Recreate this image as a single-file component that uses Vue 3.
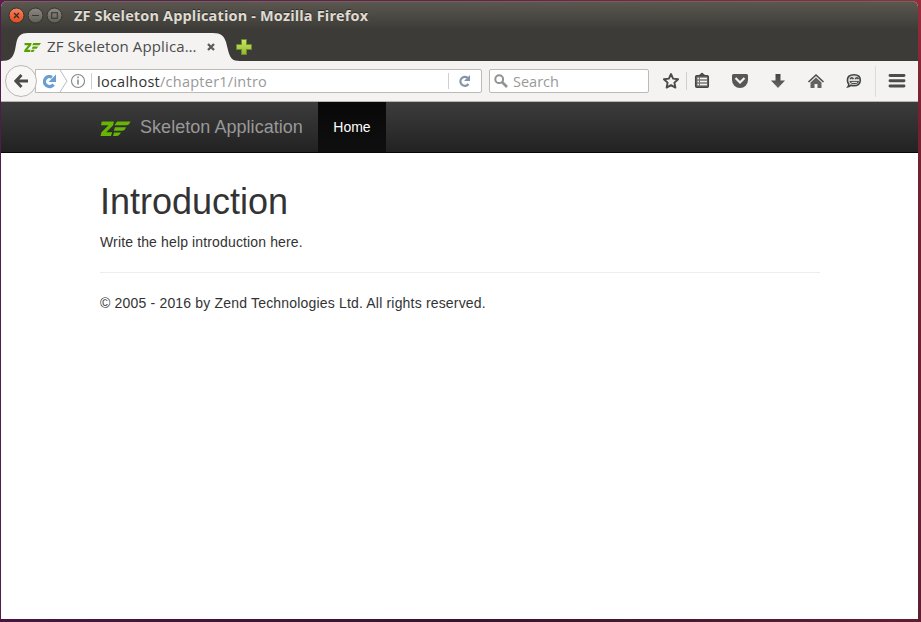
<script setup>
const title = 'ZF Skeleton Application - Mozilla Firefox'
</script>

<template>
  <div class="desktop">
    <div class="window">
      <header class="chrome">
        <div class="titlebar">
          <svg class="controls" width="60" height="20" viewBox="0 0 60 20">
            <defs>
              <linearGradient id="close" x1="0" y1="0" x2="0" y2="1">
                <stop offset="0" stop-color="#f58363" /><stop offset="1" stop-color="#df4a1b" />
              </linearGradient>
              <linearGradient id="grey" x1="0" y1="0" x2="0" y2="1">
                <stop offset="0" stop-color="#8c8981" /><stop offset="1" stop-color="#605e58" />
              </linearGradient>
            </defs>
            <circle cx="10.5" cy="9.5" r="7.5" fill="url(#close)" stroke="#35332e" />
            <circle cx="29.5" cy="9.5" r="7.5" fill="url(#grey)" stroke="#35332e" />
            <circle cx="48.5" cy="9.5" r="7.5" fill="url(#grey)" stroke="#35332e" />
            <path d="M8 7l5 5M13 7l-5 5" stroke="#45291f" stroke-width="1.4" />
            <path d="M26 9.5h7" stroke="#3a3834" stroke-width="1.2" />
            <rect x="45.7" y="6.7" width="5.6" height="5.6" fill="none" stroke="#3a3834" stroke-width="1.1" />
          </svg>
          <span class="window-title">{{ title }}</span>
        </div>
        <div class="tabs">
          <div class="tab">
            <svg class="tab-shape" width="239" height="29" viewBox="0 0 239 29">
              <path d="M0 29V28C9 28 12 25 14 17L15.500 9C17 3 20 0 27 0H212C220 0 223 3 225 9L227 17C229 25 231 28 239 28V29Z" fill="#f4f3f2" />
            </svg>
            <svg class="favicon" width="17" height="9" viewBox="0 0 31 16" preserveAspectRatio="none">
              <path d="M1 0H14L13 4L6 12H12L11 16H0L1 12L8 4H1Z" fill="#56a000" />
              <path d="M17 0H31L28 4H15ZM16 6H26L23 10H14ZM14 12H20L17 16H12Z" fill="#56a000" />
            </svg>
            <span class="tab-label">ZF Skeleton Applica…</span>
            <svg class="tab-close" width="8" height="8" viewBox="0 0 8 8"><path d="M1 1l6 6M7 1L1 7" stroke="#5c5b58" stroke-width="2.300" /></svg>
          </div>
          <svg class="new-tab" width="16" height="16" viewBox="0 0 16 16">
            <defs><linearGradient id="plus" x1="0" y1="0" x2="0" y2="1"><stop offset="0" stop-color="#d0e464" /><stop offset="1" stop-color="#92b72e" /></linearGradient></defs>
            <path d="M5.500 .5h5v5h5v5h-5v5h-5v-5h-5v-5h5z" fill="url(#plus)" stroke="#668d2c" />
          </svg>
        </div>
        <div class="toolbar">
          <div class="back">
            <svg width="16" height="16" viewBox="0 0 16 16"><path d="M8.500 2L2.800 8l5.700 6M3 8h12" fill="none" stroke="#4b4b4a" stroke-width="2.900" /></svg>
          </div>
          <div class="urlbar">
            <svg class="identity" width="57" height="22" viewBox="0 0 57 22">
              <path d="M17.500 14.500A5 5 0 1 1 16 7.300" fill="none" stroke="#6a9fd4" stroke-width="3.300" />
              <path d="M20 4.500V12H12.500Z" fill="#6a9fd4" />
              <path d="M24 0L31 11L24 22" fill="none" stroke="#bcbcbb" />
              <circle cx="42" cy="11" r="6.500" fill="none" stroke="#858585" stroke-width="1.100" />
              <path d="M42 9.500v5M42 6.500v1.700" stroke="#858585" stroke-width="1.500" />
              <path d="M55.500 3v16" stroke="#cfcfcf" />
            </svg>
            <span class="url"><b>localhost</b>/chapter1/intro</span>
            <svg class="reload" width="33" height="22" viewBox="0 0 33 22">
              <path d="M.5 3v16" stroke="#d0d0d0" />
              <path d="M20.500 14A4.500 4.500 0 1 1 19.700 7.900" fill="none" stroke="#8496a6" stroke-width="2.200" />
              <path d="M22 5V11H16Z" fill="#8496a6" />
            </svg>
          </div>
          <div class="search">
            <svg width="14" height="14" viewBox="0 0 14 14"><circle cx="5.200" cy="5.200" r="3.900" fill="none" stroke="#929292" stroke-width="2" /><path d="M8 8l5 5" stroke="#929292" stroke-width="2.600" /></svg>
            <span>Search</span>
          </div>
          <svg class="actions" width="260" height="40" viewBox="658 61 260 40">
            <defs><linearGradient id="ico" x1="0" y1="0" x2="0" y2="1"><stop offset="0" stop-color="#444" /><stop offset="1" stop-color="#686868" /></linearGradient></defs>
            <path d="M671 74l2.100 4.600 5 .6-3.700 3.400 1 5-4.400-2.500-4.400 2.500 1-5-3.700-3.400 5-.6z" fill="none" stroke="#4b4b4b" stroke-width="1.900" stroke-linejoin="round" />
            <path d="M686.500 72v18" stroke="#d0d0cf" />
            <path d="M698.500 76l3.500-3 3.500 3" fill="#555" stroke="#444" />
            <rect x="695.700" y="75.700" width="12.600" height="11.600" rx="1" fill="#777" stroke="#454545" stroke-width="1.500" />
            <path d="M697.500 78.500h1.500M697.500 81.500h1.500M697.500 84.500h1.500M700 78.500h7M700 81.500h7M700 84.500h7" stroke="#f4f3f2" stroke-width="1.700" />
            <path d="M733.500 74h13a1.500 1.500 0 0 1 1.500 1.500V80a8 8 0 0 1-16 0v-4.500a1.500 1.500 0 0 1 1.500-1.500z" fill="#575757" />
            <path d="M735.500 78l4.500 4.500 4.500-4.500" fill="none" stroke="#f4f3f2" stroke-width="2.200" />
            <path d="M775.500 74h5v6.500h4.500l-7 7.500-7-7.500h4.500z" fill="url(#ico)" />
            <path d="M808.500 82l7.500-7 7.500 7" fill="none" stroke="#4a4a4a" stroke-width="1.600" />
            <path d="M810.500 82.500l5.500-5 5.500 5V88h-4v-4h-3v4h-4z" fill="#626262" />
            <path d="M854 74.700c4 0 6.300 2.300 6.300 5.600s-2.500 5.500-6.300 5.500c-1.300 0-2.300-.2-3-.5-1 1-1.700 1.300-3 1.500.7-.9 1-1.800.7-2.900-.9-1-1.300-2-1.300-3.600 0-3.300 2.500-5.600 6.600-5.600z" fill="#dcdcdb" stroke="#444" stroke-width="1.600" />
            <path d="M850.200 79q1.600-2.500 3.200 0M855.300 79q1.500-2.500 3.200 0" stroke="#444" fill="none" stroke-width="1.500" />
            <path d="M849.500 81h9.500c-.3 2.300-2.200 3.300-4.700 3.300s-4.300-1-4.800-3.300z" fill="#505050" />
            <path d="M851.500 82.400h5.500" stroke="#eee" />
            <path d="M875.500 66v31" stroke="#dddcda" />
            <path d="M890 75.500h14M890 80.800h14M890 86h14" stroke="#4c4c4c" stroke-width="2.900" stroke-linecap="round" />
          </svg>
        </div>
      </header>
      <main class="page">
        <nav class="navbar">
          <a class="brand">
            <svg width="31" height="16" viewBox="0 0 31 16">
              <path d="M1.800.500H14L13 4.500L6.200 11.300H12.200L11 15H.5L1.500 11.300L8.600 4.300H1Z" fill="#68b604" />
              <path d="M17 .5H30.500C29.500 3 28.500 4 26.500 4.200H14.500ZM15 6.200H26C25 8.800 24 9.700 22 9.800H13.800ZM14 11.500H21C19.500 14 18.500 15 16.500 15H13Z" fill="#68b604" />
            </svg>
            <span>Skeleton Application</span>
          </a>
          <a class="home">Home</a>
        </nav>
        <div class="container">
          <h1>Introduction</h1>
          <p class="intro">Write the help introduction here.</p>
          <hr />
          <footer>© 2005 - 2016 by Zend Technologies Ltd. All rights reserved.</footer>
        </div>
      </main>
    </div>
  </div>
</template>

<style>
body { margin: 0; overflow: hidden; }
</style>

<style scoped>
* { box-sizing: border-box; }
.desktop {
  width: 921px;
  height: 622px;
  padding: 1px 3px 3px 1px;
  background:
    linear-gradient(90deg, #47163f, #37142c 50%, #5f1e32) 0 619px / 921px 3px no-repeat,
    linear-gradient(#982d3b, #74212f 20%, #5f1e32) 918px 0 / 3px 622px no-repeat,
    linear-gradient(90deg, #611b50, #6e1c49 50%, #982d3b) 0 0 / 921px 6px no-repeat,
    #521b4c;
}
.window { width: 917px; height: 618px; background: #fff; border-radius: 6px 6px 0 0; overflow: hidden; }
.chrome { font-family: "Open Sans", "Noto Sans", sans-serif; }
.chrome svg { display: block; flex: none; }
.titlebar {
  display: flex;
  align-items: center;
  height: 32px;
  padding-left: 5px;
  background: linear-gradient(#5b5850, #3c3b37 29px);
  box-shadow: inset 0 1px #69665e;
}
.controls { margin-top: -3px; }
.window-title { margin: -3px 0 0 8px; font-size: 14.5px; font-weight: 700; letter-spacing: 0.15px; color: #dfdbd2; white-space: nowrap; text-shadow: 0 -1px #2b2a27; }
.tabs { display: flex; align-items: flex-start; height: 28px; background: #3c3b37; }
.tab { position: relative; display: flex; align-items: center; width: 235px; height: 28px; padding-left: 23px; }
.tab-shape { position: absolute; left: 0; top: 0; }
.favicon, .tab-label, .tab-close { position: relative; }
.tab-label { width: 150px; margin: -2px 0 0 6px; font-size: 15px; letter-spacing: 0.12px; color: #4c4c4c; white-space: nowrap; }
.tab-close { margin-left: 10px; }
.new-tab { margin-top: 6px; }
.toolbar {
  display: flex;
  align-items: center;
  height: 41px;
  padding-left: 4px;
  background: #f4f3f2;
  border-bottom: 1px solid #b6b5b2;
}
.back {
  z-index: 1;
  display: flex;
  align-items: center;
  justify-content: center;
  width: 32px;
  height: 32px;
  border: 1px solid #b9b8b5;
  border-radius: 50%;
  background: #f8f7f6;
}
.urlbar { display: flex; align-items: center; width: 447px; height: 24px; margin-left: -2px; border: 1px solid #bbbab7; border-radius: 0 2px 2px 0; background: #fff; }
.url { flex: 1; margin-left: 4px; font-size: 14.5px; letter-spacing: 0.25px; color: #999; white-space: nowrap; }
.url b { font-weight: 400; color: #333; }
.search { display: flex; align-items: center; width: 160px; height: 24px; margin-left: 7px; padding-left: 4px; border: 1px solid #bbbab7; border-radius: 2px; background: #fff; }
.search span { margin-left: 5px; font-size: 14.500px; color: #999; }
.actions { margin-left: 9px; }
.page { font-family: "Liberation Sans", Arial, sans-serif; font-size: 14px; line-height: 20px; color: #333; }
.navbar { display: flex; height: 51px; padding-left: 99px; background: linear-gradient(#3c3c3c, #222); border-bottom: 1px solid #080808; }
.brand { display: flex; align-items: center; width: 218px; font-size: 18px; letter-spacing: 0.04px; color: #999; white-space: nowrap; }
.brand svg { margin-top: 3px; }
.brand span { margin-left: 9px; }
.home { width: 68px; padding-top: 15px; text-align: center; color: #fff; background: linear-gradient(#080808, #0f0f0f); }
.container { width: 720px; margin-left: 99px; padding-top: 29px; }
h1 { margin: 0; font-size: 36px; font-weight: 500; line-height: 40px; }
p { margin: 10px 0 0; }
.intro { letter-spacing: 0.14px; }
hr { margin: 20px 0; border: 0; border-top: 1px solid #eee; }
footer { letter-spacing: 0.18px; }
</style>
